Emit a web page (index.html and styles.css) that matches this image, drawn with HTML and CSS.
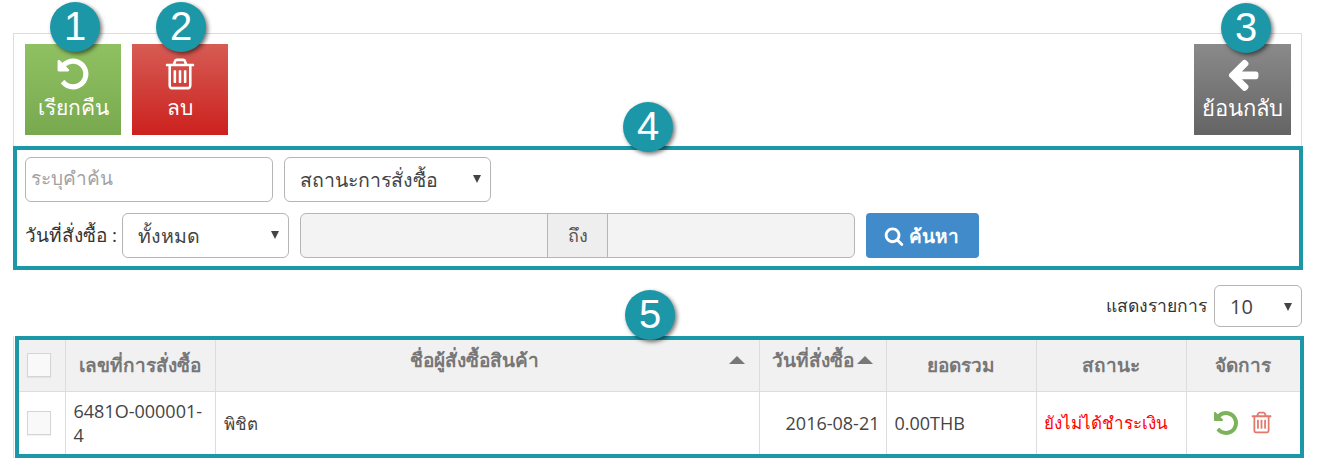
FILE: index.html
```html
<!DOCTYPE html>
<html lang="th">
<head>
  <meta charset="UTF-8">
  <title>รายการสั่งซื้อ</title>
  <meta name="viewport" content="width=device-width, initial-scale=1.0">
  <link rel="stylesheet" href="styles.css">
</head>
<body>
<svg class="icon-defs" xmlns="http://www.w3.org/2000/svg">
  <symbol id="i-undo" viewBox="0 0 1792 1792"><path d="M1664 896q0 156-61 298t-164 245-245 164-298 61q-172 0-327-72.500t-264-204.500q-7-10-6.500-22.500t8.500-20.500l137-138q10-9 25-9 16 2 23 12 73 95 179 147t225 52q104 0 198.500-40.500t163.500-109.500 109.500-163.500 40.500-198.500-40.500-198.500-109.500-163.500-163.500-109.500-198.500-40.500q-98 0-188 35.500t-160 101.500l137 138q31 30 14 69-17 40-59 40h-448q-26 0-45-19t-19-45v-448q0-42 40-59 39-17 69 14l130 129q107-101 244.500-156.500t284.500-55.500q156 0 298 61t245 164 164 245 61 298z"/></symbol>
  <symbol id="i-trash" viewBox="0 0 1792 1792"><path d="M704 736v576q0 14-9 23t-23 9h-64q-14 0-23-9t-9-23v-576q0-14 9-23t23-9h64q14 0 23 9t9 23zm256 0v576q0 14-9 23t-23 9h-64q-14 0-23-9t-9-23v-576q0-14 9-23t23-9h64q14 0 23 9t9 23zm256 0v576q0 14-9 23t-23 9h-64q-14 0-23-9t-9-23v-576q0-14 9-23t23-9h64q14 0 23 9t9 23zm128 724v-948h-896v948q0 22 7 40.500t14.500 27 10.500 8.500h832q3 0 10.500-8.500t14.500-27 7-40.500zm-672-1076h448l-48-117q-7-9-17-11h-317q-10 2-17 11zm928 32v64q0 14-9 23t-23 9h-96v948q0 83-47 143.500t-113 60.500h-832q-66 0-113-58.500t-47-141.500v-952h-96q-14 0-23-9t-9-23v-64q0-14 9-23t23-9h309l70-167q15-37 54-63t79-26h320q40 0 79 26t54 63l70 167h309q14 0 23 9t9 23z"/></symbol>
  <symbol id="i-back" viewBox="0 0 1792 1792"><path d="M1664 896v128q0 53-32.500 90.500t-84.500 37.500h-704l293 294q38 36 38 90t-38 90l-75 76q-37 37-90 37-52 0-91-37l-651-652q-37-37-37-90 0-52 37-91l651-650q38-38 91-38 52 0 90 38l75 74q38 38 38 91t-38 91l-293 293h704q52 0 84.500 37.500t32.500 90.500z"/></symbol>
  <symbol id="i-search" viewBox="0 0 1792 1792"><path d="M1216 832q0-185-131.500-316.500t-316.500-131.500-316.500 131.500-131.500 316.500 131.500 316.500 316.500 131.500 316.500-131.500 131.500-316.500zm512 832q0 52-38 90t-90 38q-54 0-90-38l-343-342q-179 124-399 124-143 0-273.500-55.500t-225-150-150-225-55.500-273.500 55.500-273.500 150-225 225-150 273.500-55.500 273.500 55.500 225 150 150 225 55.500 273.500q0 220-124 399l343 343q37 37 37 90z"/></symbol>
</svg>

<div class="page">
  <div class="toolbar">
    <div class="toolbar-left">
      <a class="tool-btn tool-green"><svg class="tool-icon"><use href="#i-undo"/></svg><span>เรียกคืน</span></a>
      <a class="tool-btn tool-red"><svg class="tool-icon"><use href="#i-trash"/></svg><span>ลบ</span></a>
    </div>
    <a class="tool-btn tool-gray"><svg class="tool-icon"><use href="#i-back"/></svg><span>ย้อนกลับ</span></a>
  </div>

  <div class="search-box">
    <div class="search-row">
      <input class="field keyword" type="text" placeholder="ระบุคำค้น">
      <div class="select-wrap status-select">
        <select class="field"><option>สถานะการสั่งซื้อ</option></select>
      </div>
    </div>
    <div class="search-row">
      <label class="date-label">วันที่สั่งซื้อ :</label>
      <div class="select-wrap date-select">
        <select class="field"><option>ทั้งหมด</option></select>
      </div>
      <div class="date-range">
        <input class="range-input range-from" type="text" disabled>
        <span class="range-addon">ถึง</span>
        <input class="range-input range-to" type="text" disabled>
      </div>
      <button class="search-btn"><svg class="search-icon"><use href="#i-search"/></svg>ค้นหา</button>
    </div>
  </div>

  <div class="page-size">
    <span>แสดงรายการ</span>
    <div class="select-wrap size-select">
      <select class="field"><option>10</option></select>
    </div>
  </div>

  <div class="table-edge">
    <div class="table-frame">
      <table class="orders">
        <colgroup>
          <col class="c-check"><col class="c-no"><col class="c-name"><col class="c-date"><col class="c-total"><col class="c-status"><col class="c-manage">
        </colgroup>
        <thead>
          <tr>
            <th><input class="check" type="checkbox"></th>
            <th>เลขที่การสั่งซื้อ</th>
            <th class="name-head"><div class="sort-head"><span class="sort-text">ชื่อผู้สั่งซื้อสินค้า</span><i class="sort-arrow"></i></div></th>
            <th class="date-head"><div class="sort-head"><span>วันที่สั่งซื้อ</span><i class="sort-arrow"></i></div></th>
            <th>ยอดรวม</th>
            <th>สถานะ</th>
            <th>จัดการ</th>
          </tr>
        </thead>
        <tbody>
          <tr>
            <td><input class="check" type="checkbox"></td>
            <td class="order-no">6481O-000001-4</td>
            <td class="buyer">พิชิต</td>
            <td class="right">2016-08-21</td>
            <td>0.00THB</td>
            <td class="status-unpaid">ยังไม่ได้ชำระเงิน</td>
            <td class="manage">
              <svg class="row-icon row-undo"><use href="#i-undo"/></svg>
              <svg class="row-icon row-trash"><use href="#i-trash"/></svg>
            </td>
          </tr>
        </tbody>
      </table>
    </div>
  </div>

  <span class="mark mark-1">1</span>
  <span class="mark mark-2">2</span>
  <span class="mark mark-3">3</span>
  <span class="mark mark-4">4</span>
  <span class="mark mark-5">5</span>
</div>
</body>
</html>
```

FILE: styles.css
```css
* {
  box-sizing: border-box;
}
body {
  margin: 0;
  background: #fff;
  color: #333;
  font-family: 'Open Sans', 'Noto Sans', 'DejaVu Sans', sans-serif;
  font-size: 18px;
}
.icon-defs {
  display: none;
}
.page {
  position: relative;
  width: 1319px;
  height: 465px;
  padding: 33px 0 0 13px;
  overflow: hidden;
}

/* toolbar */
.toolbar {
  width: 1289px;
  height: 113px;
  padding: 10px 10px 0 11px;
  border: 1px solid #ddd;
  border-bottom: 0;
  display: flex;
  justify-content: space-between;
  align-items: flex-start;
}
.toolbar-left {
  display: flex;
  gap: 11px;
}
.tool-btn {
  width: 96px;
  height: 91px;
  color: #fff;
  font-size: 21px;
  line-height: 26px;
  display: flex;
  flex-direction: column;
  align-items: center;
  padding-top: 12px;
}
.tool-icon {
  width: 36px;
  height: 36px;
  fill: #fff;
  margin-bottom: 2px;
}
.tool-green {
  background: linear-gradient(#8fc162, #79a94f);
}
.tool-red {
  background: linear-gradient(#d65c54, #cc211e);
}
.tool-gray {
  width: 97px;
  font-size: 22px;
  background: linear-gradient(#8a8a8a, #646464);
}

/* search */
.search-box {
  width: 1290px;
  height: 124px;
  border: 4px solid #1c97a8;
  padding: 7px 8px 0;
  display: flex;
  flex-direction: column;
  gap: 11px;
}
.search-row {
  display: flex;
  align-items: center;
  height: 45px;
}
.field {
  height: 45px;
  border: 1px solid #b5b5b5;
  border-radius: 6px;
  background: #fff;
  color: #444;
  font-family: inherit;
  font-size: 19.5px;
}
.keyword {
  width: 248px;
  padding: 0 5px 4px;
  font-size: 19px;
}
.keyword::placeholder {
  color: #a2a2a2;
}
.select-wrap {
  position: relative;
}
.select-wrap select {
  width: 100%;
  padding: 0 15px;
  appearance: none;
  -webkit-appearance: none;
}
.select-wrap::after {
  content: "";
  position: absolute;
  right: 10px;
  top: 18px;
  border-left: 4.5px solid transparent;
  border-right: 4.5px solid transparent;
  border-top: 8px solid #444;
}
.status-select {
  width: 207px;
  margin-left: 11px;
}
.date-label {
  width: 97px;
  font-size: 19px;
  white-space: nowrap;
  margin-top: -2px;
}
.date-select {
  width: 167px;
}
.date-range {
  width: 555px;
  height: 45px;
  margin-left: 11px;
  display: flex;
  border: 1px solid #b5b5b5;
  border-radius: 6px;
  background: #f3f3f3;
  overflow: hidden;
}
.range-input {
  border: 0;
  background: transparent;
  min-width: 0;
}
.range-from {
  width: 246px;
}
.range-to {
  flex: 1;
}
.range-addon {
  width: 61px;
  background: #eee;
  border-left: 1px solid #b5b5b5;
  border-right: 1px solid #b5b5b5;
  color: #555;
  display: flex;
  align-items: center;
  justify-content: center;
}
.search-btn {
  width: 113px;
  height: 45px;
  margin-left: 11px;
  border: 0;
  border-radius: 4px;
  background: #428bca;
  color: #fff;
  font-family: inherit;
  font-size: 19px;
  font-weight: 600;
  display: flex;
  align-items: center;
  justify-content: center;
  gap: 5px;
}
.search-icon {
  width: 20px;
  height: 20px;
  fill: #fff;
  margin-left: -2px;
}

/* page size */
.page-size {
  width: 1289px;
  height: 42px;
  margin-top: 15px;
  font-size: 17.5px;
  display: flex;
  justify-content: flex-end;
  align-items: center;
  gap: 7px;
}
.size-select {
  width: 88px;
}
.size-select select {
  height: 42px;
  font-size: 20px;
}

/* table */
.table-edge {
  width: 1291px;
  margin-top: 9px;
  padding-left: 1px;
  border-left: 1px solid #ddd;
}
.table-frame {
  border: 4px solid #1c97a8;
  width: 1289px;
}
.orders {
  width: 100%;
  table-layout: fixed;
  border-collapse: collapse;
}
.c-check { width: 46px; }
.c-no { width: 150px; }
.c-name { width: 544px; }
.c-date { width: 127px; }
.c-total { width: 150px; }
.c-status { width: 150px; }
.orders th, .orders td {
  border: 1px solid #ddd;
  padding: 0 8px;
}
.orders tr > :first-child { border-left: 0; }
.orders tr > :last-child { border-right: 0; }
.orders thead tr > * { border-top: 0; }
.orders tbody tr > * { border-bottom: 0; }
.orders th {
  height: 51px;
  background: #f1f1f1;
  color: #777;
  font-size: 19px;
  font-weight: 700;
  text-align: center;
}
.orders td {
  height: 63px;
  font-size: 18px;
  line-height: 24px;
  color: #444;
}
.orders .buyer {
  font-size: 17px;
  padding-top: 2px;
}
.check {
  appearance: none;
  -webkit-appearance: none;
  display: block;
  width: 24px;
  height: 24px;
  margin: 0;
  border: 1px solid #d5d5d5;
  background: #f9f9f9;
  box-shadow: 0 1px 1px rgba(0,0,0,0.05);
}
.order-no {
  word-break: break-all;
}
.orders .right {
  padding-right: 6px;
  text-align: right;
}
.sort-head {
  display: flex;
  align-items: center;
  justify-content: center;
  gap: 3px;
  margin-bottom: 10px;
}
.sort-text {
  flex: 1;
}
.orders .name-head {
  padding-right: 14px;
}
.orders .date-head {
  padding: 0;
}
.sort-arrow {
  border-left: 8px solid transparent;
  border-right: 8px solid transparent;
  border-bottom: 8px solid #777;
}
.orders .status-unpaid {
  color: #f00;
  font-size: 17px;
  padding: 0 0 0 7px;
  white-space: nowrap;
}
.manage {
  text-align: center;
  white-space: nowrap;
}
.row-icon {
  vertical-align: middle;
}
.row-undo {
  width: 28px;
  height: 28px;
  fill: #7cb25a;
  margin-right: 4px;
}
.row-trash {
  width: 25px;
  height: 25px;
  fill: #e4786c;
}

/* numbered callouts over the screenshot */
.mark {
  position: absolute;
  width: 50px;
  height: 50px;
  border-radius: 50%;
  background: #1c97a8;
  box-shadow: 2px 2px 4px rgba(0,0,0,0.55);
  color: #fff;
  font-family: 'Liberation Sans', sans-serif;
  font-size: 40px;
  line-height: 49px;
  text-align: center;
}
.mark-1 { left: 50px; top: 2px; }
.mark-2 { left: 156px; top: 2px; }
.mark-3 { left: 1221px; top: 3px; }
.mark-4 { left: 623px; top: 102px; }
.mark-5 { left: 625px; top: 290px; }
```
